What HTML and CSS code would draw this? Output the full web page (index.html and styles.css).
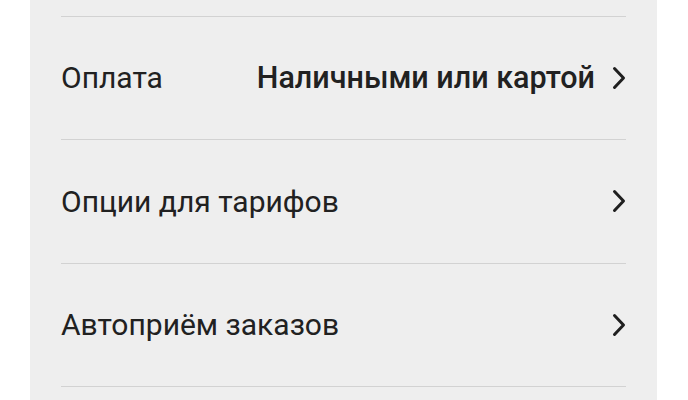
FILE: index.html
```html
<!DOCTYPE html>
<html lang="ru">
<head>
<meta charset="utf-8">
<link rel="stylesheet" href="styles.css">
</head>
<body>
<div class="panel">
  <div class="list">
    <div class="row row-cut"></div>
    <div class="row">
      <span class="label">Оплата</span>
      <span class="value">Наличными или картой</span>
      <svg class="chev" viewBox="0 0 14 24" width="14" height="24"><path d="M2.5 2.5 L11.5 12 L2.5 21.5"/></svg>
    </div>
    <div class="row">
      <span class="label">Опции для тарифов</span>
      <span class="value"></span>
      <svg class="chev" viewBox="0 0 14 24" width="14" height="24"><path d="M2.5 2.5 L11.5 12 L2.5 21.5"/></svg>
    </div>
    <div class="row">
      <span class="label">Автоприём заказов</span>
      <span class="value"></span>
      <svg class="chev" viewBox="0 0 14 24" width="14" height="24"><path d="M2.5 2.5 L11.5 12 L2.5 21.5"/></svg>
    </div>
    <div class="row row-end"></div>
  </div>
</div>
</body>
</html>
```
FILE: styles.css
```css
html, body {
  margin: 0;
  padding: 0;
  background: #ffffff;
}
body {
  font-family: Roboto, "Noto Sans", sans-serif;
  color: #212121;
}
.panel {
  margin-left: 30px;
  width: 627px;
  height: 400px;
  overflow: hidden;
  background: #eeeeee;
  padding: 0 31px;
  box-sizing: border-box;
}
.row {
  display: flex;
  align-items: center;
  height: 123.5px;
  box-sizing: border-box;
  border-bottom: 1.5px solid #d2d2d2;
}
.row-cut {
  height: 16.5px;
}
.row-end {
  height: 16px;
  border-bottom: none;
}
.label {
  font-size: 30px;
  flex: 1;
  white-space: nowrap;
}
.value {
  font-size: 30.5px;
  font-weight: 500;
  margin-right: 17px;
  white-space: nowrap;
}
.chev {
  display: block;
}
.chev path {
  fill: none;
  stroke: #1f1f1f;
  stroke-width: 3;
  stroke-linecap: round;
  stroke-linejoin: round;
}
```
